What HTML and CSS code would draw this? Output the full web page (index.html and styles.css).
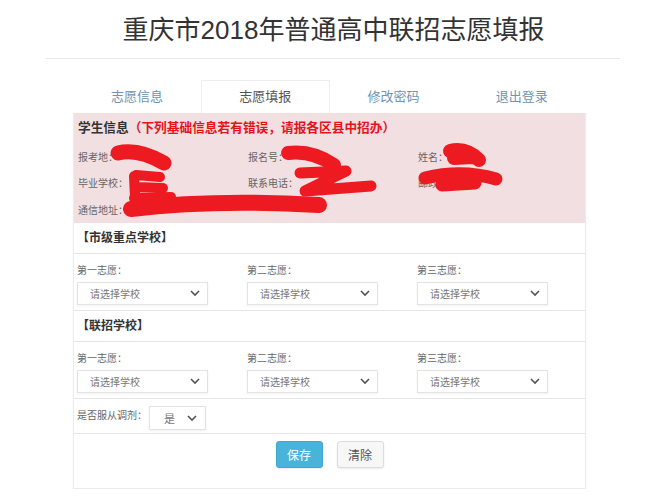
FILE: index.html
```html
<!DOCTYPE html>
<html lang="zh-CN">

<head>
  <meta charset="UTF-8">
  <meta name="viewport" content="width=device-width, initial-scale=1.0">
  <title>重庆市2018年普通高中联招志愿填报</title>
  <link rel="stylesheet" href="styles.css">
</head>

<body>
  <h1 class="title">重庆市2018年普通高中联招志愿填报</h1>
  <div class="rule"></div>

  <div class="wrap">
    <!-- 顶部选项卡 -->
    <div class="tabs">
      <a class="tab">志愿信息</a>
      <a class="tab active">志愿填报</a>
      <a class="tab">修改密码</a>
      <a class="tab">退出登录</a>
    </div>

    <div class="panel">
      <!-- 学生信息 -->
      <div class="info">
        <div class="info-head">学生信息<span class="warn">（下列基础信息若有错误，请报各区县中招办）</span></div>
        <div class="info-grid">
          <div>报考地：</div>
          <div>报名号：</div>
          <div>姓名：</div>
          <div>毕业学校：</div>
          <div>联系电话：</div>
          <div>邮政编码：</div>
          <div>通信地址：</div>
        </div>
        <svg class="scribble" width="513" height="110" viewBox="0 0 513 110">
          <g fill="none" stroke="#ee1a22" stroke-linecap="round" stroke-linejoin="round">
            <path d="M44 40 Q 64 35 90 50" stroke-width="15" />
            <path d="M62 62 L86 64 M60 63 L61 85 M64 74 L89 75 M60 85 L97 84" stroke-width="10" />
            <path d="M57 96 Q 140 86 245 92" stroke-width="16" />
            <path d="M214 40 Q 238 37 260 52" stroke-width="14" />
            <path d="M226 60 L272 58 L231 78 L297 73" stroke-width="11" />
            <path d="M376 38 Q 392 34 405 47 M380 45 L399 44" stroke-width="14" />
            <path d="M351 65 Q 388 56 422 66 M368 72 L401 70" stroke-width="13" />
          </g>
        </svg>
      </div>

      <!-- 市级重点学校 -->
      <div class="group-head">【市级重点学校】</div>
      <div class="choices">
        <div class="choice">
          <div class="label">第一志愿：</div>
          <div class="select">请选择学校<svg width="10" height="7" viewBox="0 0 10 7"><path d="M1 1 L5 5 L9 1" fill="none" stroke="#555" stroke-width="1.6" /></svg></div>
        </div>
        <div class="choice">
          <div class="label">第二志愿：</div>
          <div class="select">请选择学校<svg width="10" height="7" viewBox="0 0 10 7"><path d="M1 1 L5 5 L9 1" fill="none" stroke="#555" stroke-width="1.6" /></svg></div>
        </div>
        <div class="choice">
          <div class="label">第三志愿：</div>
          <div class="select">请选择学校<svg width="10" height="7" viewBox="0 0 10 7"><path d="M1 1 L5 5 L9 1" fill="none" stroke="#555" stroke-width="1.6" /></svg></div>
        </div>
      </div>

      <!-- 联招学校 -->
      <div class="group-head">【联招学校】</div>
      <div class="choices">
        <div class="choice">
          <div class="label">第一志愿：</div>
          <div class="select">请选择学校<svg width="10" height="7" viewBox="0 0 10 7"><path d="M1 1 L5 5 L9 1" fill="none" stroke="#555" stroke-width="1.6" /></svg></div>
        </div>
        <div class="choice">
          <div class="label">第二志愿：</div>
          <div class="select">请选择学校<svg width="10" height="7" viewBox="0 0 10 7"><path d="M1 1 L5 5 L9 1" fill="none" stroke="#555" stroke-width="1.6" /></svg></div>
        </div>
        <div class="choice">
          <div class="label">第三志愿：</div>
          <div class="select">请选择学校<svg width="10" height="7" viewBox="0 0 10 7"><path d="M1 1 L5 5 L9 1" fill="none" stroke="#555" stroke-width="1.6" /></svg></div>
        </div>
      </div>

      <!-- 是否服从调剂 -->
      <div class="adjust">
        <span class="label">是否服从调剂：</span>
        <div class="select small">是<svg width="10" height="7" viewBox="0 0 10 7"><path d="M1 1 L5 5 L9 1" fill="none" stroke="#555" stroke-width="1.6" /></svg></div>
      </div>

      <div class="actions">
        <button class="btn primary">保存</button>
        <button class="btn">清除</button>
      </div>
    </div>
  </div>
</body>

</html>
```

FILE: styles.css
```css
body {
  margin: 0;
  background: #fff;
  color: #333;
  font-family: "Liberation Sans", "Noto Sans CJK SC", sans-serif;
}

.title {
  margin: 13px 0 0;
  font-size: 26px;
  font-weight: normal;
  line-height: 34px;
  text-align: center;
  color: #333;
}

.rule {
  width: 575px;
  height: 1px;
  margin: 11px 0 0 45px;
  background: #eaeaea;
}

.wrap {
  width: 513px;
  margin: 21px 0 0 73px;
}

/* 选项卡 */
.tabs {
  display: flex;
  height: 33px;
}

.tab {
  flex: 1;
  display: flex;
  justify-content: center;
  align-items: center;
  padding-bottom: 3px;
  font-size: 13px;
  color: #6f93b0;
  border: 1px solid transparent;
  border-bottom: none;
}

.tab.active {
  color: #555;
  background: #fff;
  border-color: #eee;
}

.panel {
  border: 1px solid #ececec;
  border-top: none;
  box-shadow: 0 1px 2px rgba(0, 0, 0, 0.04);
}

/* 学生信息 */
.info {
  position: relative;
  height: 110px;
  padding-top: 5px;
  box-sizing: border-box;
  background: #f2dfe1;
}

.info-head {
  padding-left: 4px;
  font-size: 12.7px;
  font-weight: bold;
  line-height: 20px;
  color: #333;
}

.info-head .warn {
  color: #e5141c;
}

.info-grid {
  display: grid;
  grid-template-columns: 170px 170px 1fr;
  grid-auto-rows: 26.5px;
  align-items: center;
  margin-top: 5px;
  padding-left: 4px;
  font-size: 10px;
  color: #666;
}

.scribble {
  position: absolute;
  top: 0;
  left: 0;
}

.group-head {
  height: 30px;
  padding-left: 3px;
  font-size: 12px;
  font-weight: bold;
  line-height: 30px;
  border-bottom: 1px solid #e6e6e6;
}

.choices {
  display: grid;
  grid-template-columns: 170px 170px 1fr;
  padding: 9px 0 5px 3px;
  border-bottom: 1px solid #e6e6e6;
}

.label {
  font-size: 10px;
  line-height: 16px;
  color: #666;
}

.select {
  display: flex;
  justify-content: space-between;
  align-items: center;
  width: 131px;
  height: 23px;
  margin-top: 3px;
  padding: 0 7px 0 12px;
  box-sizing: border-box;
  font-size: 10px;
  color: #777;
  background: #fff;
  border: 1px solid #e3e3e3;
  box-shadow: 0 1px 2px rgba(0, 0, 0, 0.06);
}

.adjust {
  display: flex;
  align-items: center;
  gap: 2px;
  height: 35px;
  padding: 0 0 1px 3px;
  box-sizing: border-box;
  border-bottom: 1px solid #e6e6e6;
}

.select.small {
  width: 57px;
  height: 24px;
  margin-top: 5px;
  padding: 0 8px 0 14px;
  font-size: 11px;
}

.actions {
  display: flex;
  justify-content: center;
  gap: 14px;
  height: 54px;
  padding-top: 7px;
  box-sizing: border-box;
}

.btn {
  width: 47px;
  height: 27px;
  padding: 0;
  font-family: "Noto Sans CJK SC", sans-serif;
  font-size: 12px;
  color: #555;
  background: #f7f7f7;
  border: 1px solid #dcdcdc;
  border-radius: 3px;
  box-shadow: 0 1px 2px rgba(0, 0, 0, 0.08);
}

.btn.primary {
  color: #fff;
  background: #4ab3d9;
  border-color: #40a8cf;
}
```
